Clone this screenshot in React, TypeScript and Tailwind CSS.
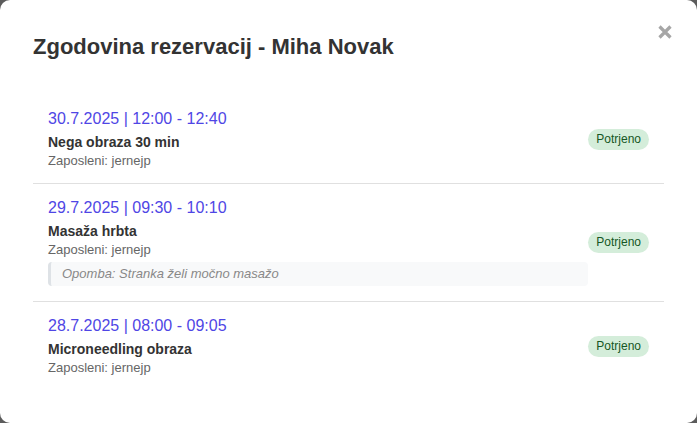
import React from 'react';

interface Reservation {
  id: number;
  date: string;
  service: string;
  employee: string;
  note?: string;
  status: string;
}

const reservations: Reservation[] = [
  { id: 1, date: '30.7.2025 | 12:00 - 12:40', service: 'Nega obraza 30 min', employee: 'jernejp', status: 'Potrjeno' },
  {
    id: 2,
    date: '29.7.2025 | 09:30 - 10:10',
    service: 'Masaža hrbta',
    employee: 'jernejp',
    note: 'Stranka želi močno masažo',
    status: 'Potrjeno',
  },
  { id: 3, date: '28.7.2025 | 08:00 - 09:05', service: 'Microneedling obraza', employee: 'jernejp', status: 'Potrjeno' },
];

const App = () => {
  return (
    <div className="h-[423px] w-[697px] bg-[#5c5c5c] font-['Liberation_Sans',Arial,sans-serif]">
      <div className="relative h-full w-full rounded-[10px] bg-white px-[33px] pt-[34px]">
        {/* Close */}
        <button className="absolute right-[25px] top-[25px] h-[14px] w-[14px]" aria-label="Zapri">
          <svg viewBox="0 0 14 14" width="14" height="14">
            <path d="M1.5 1.5 L12.5 12.5 M12.5 1.5 L1.5 12.5" stroke="#a6a6a6" strokeWidth="3.2" />
          </svg>
        </button>

        <h2 className="text-[22px] font-bold leading-[25px] text-[#333]">Zgodovina rezervacij - Miha Novak</h2>

        {/* List */}
        <div className="mt-[36px]">
          {reservations.map((r, i) => (
            <div
              key={r.id}
              className={`flex items-center p-[15px] ${i < reservations.length - 1 ? 'border-b border-[#e0e0e0]' : ''}`}
            >
              <div className="min-w-0 flex-1">
                <div className="mb-[6px] text-[16px] leading-[18px] text-[#4f46e5]">{r.date}</div>
                <div className="mb-[3px] text-[14px] font-bold leading-[16px] text-[#333]">{r.service}</div>
                <div className="text-[13px] leading-[15px] text-[#666]">Zaposleni: {r.employee}</div>
                {r.note && (
                  <div className="mt-[5px] rounded-[4px] border-l-[3px] border-[#dee2e6] bg-[#f8f9fa] px-[11px] py-[4px] text-[13px] italic leading-[16px] text-[#888]">
                    Opomba: {r.note}
                  </div>
                )}
              </div>
              <span className="shrink-0 rounded-full bg-[#d4edda] px-[8px] py-[4px] text-[12px] leading-[13px] text-[#155724]">
                {r.status}
              </span>
            </div>
          ))}
        </div>
      </div>
    </div>
  );
};

export default App;
